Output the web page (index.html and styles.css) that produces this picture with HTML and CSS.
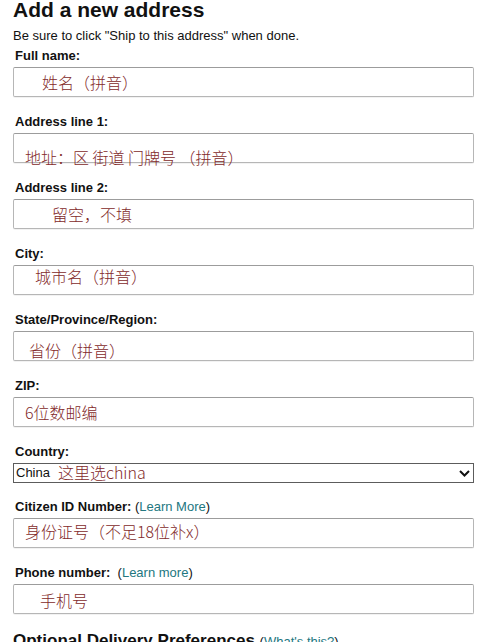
FILE: index.html
```
<!DOCTYPE html>
<html lang="en">
<head>
<meta charset="utf-8">
<title>Add a new address</title>
<link rel="stylesheet" href="styles.css">
</head>
<body>
<div class="page">
  <h1 class="title">Add a new address</h1>
  <p class="hint">Be sure to click "Ship to this address" when done.</p>

  <div class="group">
    <div class="label">Full name:</div>
    <div class="field"><span class="note note-name">姓名（拼音）</span></div>
  </div>

  <div class="group">
    <div class="label">Address line 1:</div>
    <div class="field"><span class="note note-addr1">地址：区 街道 门牌号 （拼音）</span></div>
  </div>

  <div class="group">
    <div class="label">Address line 2:</div>
    <div class="field"><span class="note note-addr2">留空，不填</span></div>
  </div>

  <div class="group">
    <div class="label">City:</div>
    <div class="field"><span class="note note-city">城市名（拼音）</span></div>
  </div>

  <div class="group">
    <div class="label">State/Province/Region:</div>
    <div class="field"><span class="note note-state">省份（拼音）</span></div>
  </div>

  <div class="group">
    <div class="label">ZIP:</div>
    <div class="field"><span class="note note-zip">6位数邮编</span></div>
  </div>

  <div class="group group-select">
    <div class="label">Country:</div>
    <div class="select">
      <span class="select-value">China</span>
      <span class="note note-country">这里选china</span>
      <svg class="chev" viewBox="0 0 11 7" width="11" height="7" aria-hidden="true"><polyline points="1,1 5.5,5.5 10,1" fill="none" stroke="#111" stroke-width="2"/></svg>
    </div>
  </div>

  <div class="group">
    <div class="label">Citizen ID Number: <span class="aside">(<a class="link" href="#">Learn More</a>)</span></div>
    <div class="field"><span class="note note-id">身份证号（不足18位补x）</span></div>
  </div>

  <div class="group">
    <div class="label">Phone number: <span class="aside">&nbsp;(<a class="link" href="#">Learn more</a>)</span></div>
    <div class="field"><span class="note note-phone">手机号</span></div>
  </div>

  <h2 class="section">Optional Delivery Preferences <span class="aside">(<a class="link" href="#">What's this?</a>)</span></h2>
</div>
</body>
</html>
```

FILE: styles.css
```
html, body {
  margin: 0;
  padding: 0;
  background: #ffffff;
}

body {
  font-family: "Liberation Sans", Arial, sans-serif;
  color: #111111;
  overflow: hidden;
}

.page {
  padding: 0 8px 0 13px;
}

.title {
  margin: 0;
  font-size: 21px;
  line-height: 20px;
  font-weight: bold;
  color: #111111;
}

.hint {
  margin: 8px 0 4px;
  font-size: 13px;
  line-height: 16px;
  color: #111111;
}

.group {
  margin-bottom: 17px;
}

.group-select {
  margin-bottom: 16px;
}

.label {
  padding-left: 2px;
  margin-bottom: 3px;
  font-size: 13px;
  line-height: 16px;
  font-weight: bold;
  color: #111111;
  white-space: nowrap;
}

.aside {
  font-weight: normal;
  color: #111111;
}

.link {
  color: #23777f;
  text-decoration: none;
}

.field {
  box-sizing: border-box;
  height: 30px;
  border: 1px solid #b6b6b6;
  border-top-color: #9c9c9c;
  border-radius: 2px;
  box-shadow: 0 1px 0 rgba(0, 0, 0, 0.05);
  background: #ffffff;
  display: flex;
  align-items: center;
}

.note {
  font-family: "Noto Sans CJK SC", "Noto Sans", sans-serif;
  font-size: 16px;
  font-weight: 300;
  line-height: 18px;
  color: #832a2a;
  white-space: pre;
}

.note-name { padding-left: 28px; }
.note-addr1 { padding-left: 11px; margin-top: 18px; }
.note-addr2 { padding-left: 38px; }
.note-city { padding-left: 21px; margin-bottom: 8px; }
.note-state { padding-left: 15px; margin-top: 8px; }
.note-zip { padding-left: 11px; }
.note-id { padding-left: 11px; margin-bottom: 4px; }
.note-phone { padding-left: 26px; margin-top: 2px; }

.select {
  box-sizing: border-box;
  height: 20px;
  border: 1px solid #5c5c5c;
  background: #ffffff;
  display: flex;
  align-items: center;
  padding: 0 3px 0 2px;
}

.select-value {
  font-size: 13px;
  line-height: 16px;
  color: #111111;
}

.note-country {
  margin-left: 8px;
  margin-bottom: 2px;
}

.chev {
  margin-left: auto;
  flex: none;
}

.section {
  margin: 0;
  font-size: 17px;
  line-height: 20px;
  font-weight: bold;
  color: #111111;
  white-space: nowrap;
}

.section .aside {
  font-size: 13px;
}
```
